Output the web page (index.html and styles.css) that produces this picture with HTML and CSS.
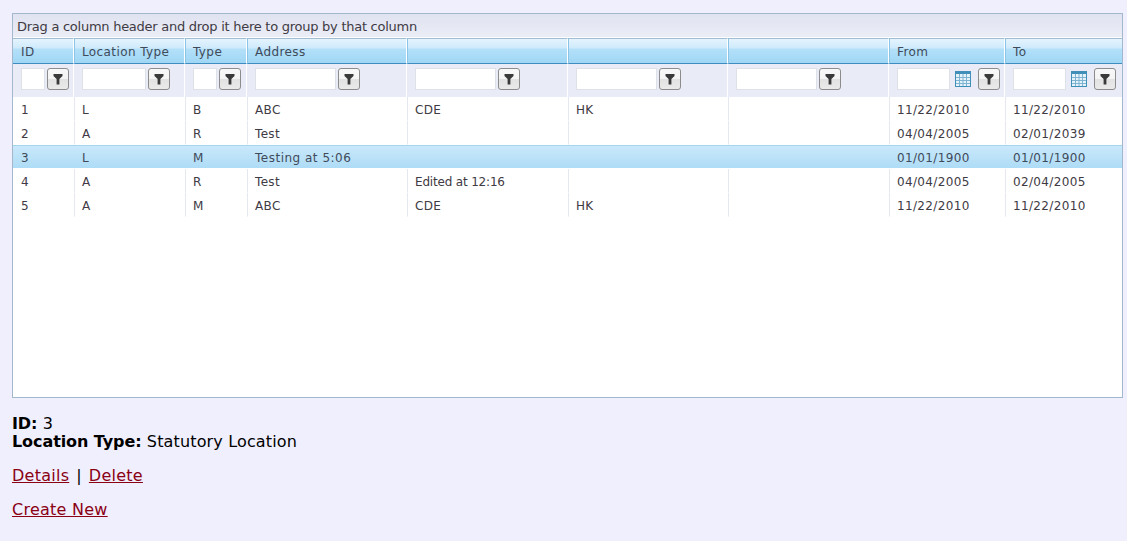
FILE: index.html
```html
<!DOCTYPE html>
<html lang="en">
<head>
<meta charset="utf-8">
<title>Locations</title>
<link rel="stylesheet" href="styles.css">
</head>
<body>
<div class="grid">
  <div class="group-panel">Drag a column header and drop it here to group by that column</div>
  <table class="grid-table">
    <colgroup>
      <col class="c-id"><col class="c-loc"><col class="c-type"><col class="c-wide"><col class="c-wide2"><col class="c-wide"><col class="c-wide2"><col class="c-date"><col class="c-last">
    </colgroup>
    <thead>
      <tr class="head-row">
        <th>ID</th><th>Location Type</th><th>Type</th><th>Address</th><th></th><th></th><th></th><th>From</th><th class="last">To</th>
      </tr>
      <tr class="filter-row">
        <td><div class="filter"><input class="fi fi-s" type="text"><button class="fb" type="button"><svg class="funnel" viewBox="0 0 12 12"><path d="M1.5 1h9v2L7.4 6v5.5H4.6V6L1.5 3z"/></svg></button></div></td>
        <td><div class="filter"><input class="fi fi-m" type="text"><button class="fb" type="button"><svg class="funnel" viewBox="0 0 12 12"><path d="M1.5 1h9v2L7.4 6v5.5H4.6V6L1.5 3z"/></svg></button></div></td>
        <td><div class="filter"><input class="fi fi-s" type="text"><button class="fb" type="button"><svg class="funnel" viewBox="0 0 12 12"><path d="M1.5 1h9v2L7.4 6v5.5H4.6V6L1.5 3z"/></svg></button></div></td>
        <td><div class="filter"><input class="fi fi-l" type="text"><button class="fb" type="button"><svg class="funnel" viewBox="0 0 12 12"><path d="M1.5 1h9v2L7.4 6v5.5H4.6V6L1.5 3z"/></svg></button></div></td>
        <td><div class="filter"><input class="fi fi-l" type="text"><button class="fb" type="button"><svg class="funnel" viewBox="0 0 12 12"><path d="M1.5 1h9v2L7.4 6v5.5H4.6V6L1.5 3z"/></svg></button></div></td>
        <td><div class="filter"><input class="fi fi-l" type="text"><button class="fb" type="button"><svg class="funnel" viewBox="0 0 12 12"><path d="M1.5 1h9v2L7.4 6v5.5H4.6V6L1.5 3z"/></svg></button></div></td>
        <td><div class="filter"><input class="fi fi-l" type="text"><button class="fb" type="button"><svg class="funnel" viewBox="0 0 12 12"><path d="M1.5 1h9v2L7.4 6v5.5H4.6V6L1.5 3z"/></svg></button></div></td>
        <td><div class="filter"><input class="fi fi-d" type="text"><svg class="cal" viewBox="0 0 16 16"><rect x="0.5" y="0.5" width="15" height="15" fill="#e4f2fa" stroke="#3f8fb8"/><rect x="1" y="1" width="14" height="2" fill="#3f8fb8"/><path d="M1 6.5h14M1 9.5h14M1 12.5h14M4.5 3v12M8 3v12M11.5 3v12" stroke="#7fb3d2" fill="none"/></svg><button class="fb" type="button"><svg class="funnel" viewBox="0 0 12 12"><path d="M1.5 1h9v2L7.4 6v5.5H4.6V6L1.5 3z"/></svg></button></div></td>
        <td class="last"><div class="filter"><input class="fi fi-d" type="text"><svg class="cal" viewBox="0 0 16 16"><rect x="0.5" y="0.5" width="15" height="15" fill="#e4f2fa" stroke="#3f8fb8"/><rect x="1" y="1" width="14" height="2" fill="#3f8fb8"/><path d="M1 6.5h14M1 9.5h14M1 12.5h14M4.5 3v12M8 3v12M11.5 3v12" stroke="#7fb3d2" fill="none"/></svg><button class="fb" type="button"><svg class="funnel" viewBox="0 0 12 12"><path d="M1.5 1h9v2L7.4 6v5.5H4.6V6L1.5 3z"/></svg></button></div></td>
      </tr>
    </thead>
    <tbody>
      <tr><td>1</td><td>L</td><td>B</td><td>ABC</td><td>CDE</td><td>HK</td><td></td><td>11/22/2010</td><td class="last">11/22/2010</td></tr>
      <tr><td>2</td><td>A</td><td>R</td><td>Test</td><td></td><td></td><td></td><td>04/04/2005</td><td class="last">02/01/2039</td></tr>
      <tr class="selected"><td>3</td><td>L</td><td>M</td><td class="wide-note">Testing at 5:06</td><td></td><td></td><td></td><td>01/01/1900</td><td class="last">01/01/1900</td></tr>
      <tr><td>4</td><td>A</td><td>R</td><td>Test</td><td class="tight-note">Edited at 12:16</td><td></td><td></td><td>04/04/2005</td><td class="last">02/04/2005</td></tr>
      <tr><td>5</td><td>A</td><td>M</td><td>ABC</td><td>CDE</td><td>HK</td><td></td><td>11/22/2010</td><td class="last">11/22/2010</td></tr>
    </tbody>
  </table>
</div>
<div class="summary">
  <div><strong>ID:</strong> 3</div>
  <div><strong>Location Type:</strong> Statutory Location</div>
</div>
<p class="actions"><a href="#details">Details</a><span class="sep">|</span><a href="#delete">Delete</a></p>
<p class="actions"><a href="#create">Create New</a></p>
</body>
</html>
```
FILE: styles.css
```css
html, body {
  margin: 0;
  padding: 0;
}
body {
  background: #f0effd;
  padding: 13px 4px 0 12px;
  font-family: "DejaVu Sans", Verdana, sans-serif;
  font-size: 16px;
  color: #000;
  height: 528px;
  overflow: hidden;
}
.grid {
  box-sizing: border-box;
  height: 385px;
  border: 1px solid #a3b8cc;
  background: #fff;
  font-size: 12px;
  color: #403a44;
}
.group-panel {
  box-sizing: border-box;
  height: 24px;
  line-height: 26px;
  padding-left: 4px;
  font-size: 13px;
  letter-spacing: -0.26px;
  background: linear-gradient(#dfe2f0, #ebedf6);
  border-bottom: 1px solid #fff;
}
.grid-table {
  width: 100%;
  border-collapse: separate;
  border-spacing: 0;
  table-layout: fixed;
}
.c-id { width: 61px; }
.c-loc { width: 111px; }
.c-type { width: 62px; }
.c-wide { width: 160px; }
.c-wide2 { width: 161px; }
.c-date { width: 116px; }
.head-row th {
  box-sizing: border-box;
  height: 26px;
  padding: 1px 0 0 7px;
  font-weight: normal;
  text-align: left;
  letter-spacing: 0.4px;
  color: #3f4a5a;
  background: linear-gradient(#e4f4fe 0, #cfeafb 9px, #b4e0f9 10px, #9fd7f5 100%);
  border-top: 1px solid #a3bccf;
  border-left: 1px solid #8cc4e8;
  border-right: 1px solid #fff;
  border-bottom: 1px solid #3f8cc0;
}
.head-row th:first-child { border-left: 0; padding-left: 8px; }
.head-row th.last { border-right: 0; }
.filter-row td {
  box-sizing: border-box;
  height: 33px;
  padding: 0 0 3px 8px;
  background: #e9ecf6;
  border-right: 1px solid #fff;
}
.filter-row td.last { border-right: 0; }
.filter {
  display: flex;
  align-items: center;
}
.fi {
  box-sizing: border-box;
  flex: none;
  height: 22px;
  margin: 0;
  padding: 0;
  border: 1px solid #dfe1e8;
  background: #fff;
}
.fi-s { width: 24px; }
.fi-m { width: 64px; }
.fi-l { width: 81px; }
.fi-d { width: 53px; }
.fb {
  box-sizing: border-box;
  flex: none;
  width: 22px;
  height: 22px;
  margin: 0 0 0 2px;
  padding: 0;
  display: flex;
  align-items: center;
  justify-content: center;
  border: 1px solid #8c8c8c;
  border-radius: 3px;
  background: linear-gradient(#f8f8f8, #f4f4f4 50%, #e2e2e2 50%, #eaeaea);
}
.funnel {
  width: 12px;
  height: 12px;
  fill: #3a3a3a;
}
.cal {
  flex: none;
  width: 16px;
  height: 16px;
  margin: 0 5px;
}
.cal + .fb { margin-left: 2px; }
tbody td {
  box-sizing: border-box;
  height: 24px;
  padding: 2px 0 0 7px;
  letter-spacing: 0.35px;
  border-left: 1px solid #e6e8ef;
  border-bottom: 1px solid #fff;
  white-space: nowrap;
}
tbody td:first-child { border-left: 0; padding-left: 8px; }
tbody td.wide-note { letter-spacing: 0.5px; }
tbody td.tight-note { letter-spacing: -0.18px; }
.selected td {
  border-top: 1px solid #a4d4ee;
  border-left: 0;
  border-bottom: 1px solid #fff;
  padding: 1px 0 0 8px;
  background: linear-gradient(#c9e8fb, #aedcf6);
  color: #3f4a5a;
}
.summary {
  margin-top: 17px;
  line-height: 18px;
  letter-spacing: 0.15px;
}
.summary strong { letter-spacing: -0.08px; }
.actions {
  margin: 16px 0 0;
  line-height: 18px;
  letter-spacing: 0.25px;
}
.actions a {
  color: #8a0014;
}
.sep {
  margin: 0 7px;
}
```
